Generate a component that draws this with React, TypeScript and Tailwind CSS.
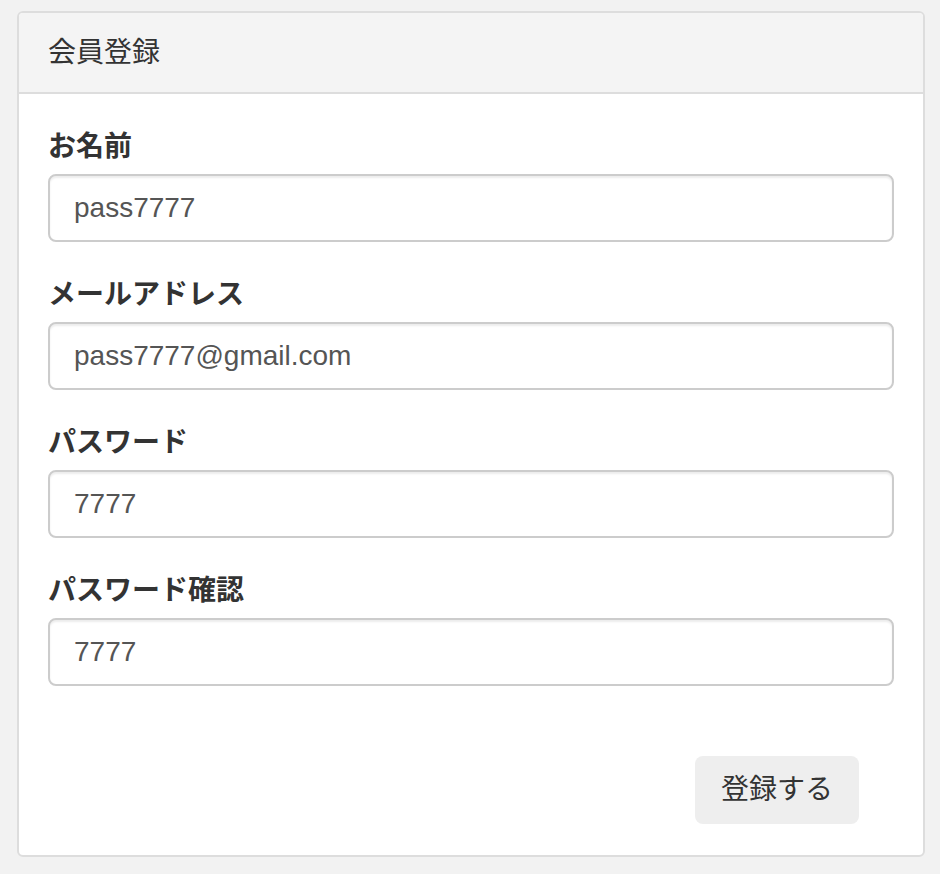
import React, { useState } from 'react';

const fields = [
  { id: 'name', label: 'お名前', type: 'text', value: 'pass7777' },
  { id: 'email', label: 'メールアドレス', type: 'email', value: 'pass7777@gmail.com' },
  { id: 'password', label: 'パスワード', type: 'text', value: '7777' },
  { id: 'password_confirmation', label: 'パスワード確認', type: 'text', value: '7777' },
];

const font = "font-['Liberation_Sans','Noto_Sans_CJK_JP',sans-serif]";

export default function App() {
  const [values, setValues] = useState<Record<string, string>>(
    Object.fromEntries(fields.map((f) => [f.id, f.value]))
  );

  return (
    <div className={`min-h-[874px] bg-[#f2f2f2] pt-[11px] pl-[17px] pr-[15px] ${font}`}>
      <div className="bg-white border-2 border-[#dddddd] rounded-[6px] overflow-hidden">
        <div className="bg-[#f4f4f4] border-b-2 border-[#dddddd] px-[29px] pt-[20px] pb-[19px] text-[28px] leading-[40px] text-[#333333]">
          会員登録
        </div>

        <form className="px-[29px] pt-[33px] pb-[31px]" onSubmit={(e) => e.preventDefault()}>
          {fields.map((f) => (
            <div key={f.id} className="mb-[33px]">
              <label
                htmlFor={f.id}
                className="block mb-[7px] text-[28px] leading-[40px] font-bold text-[#333333]"
              >
                {f.label}
              </label>
              <input
                id={f.id}
                type={f.type}
                value={values[f.id]}
                onChange={(e) => setValues({ ...values, [f.id]: e.target.value })}
                className={`block w-full h-[68px] px-[24px] border-2 border-[#cccccc] rounded-[8px] bg-white text-[28px] text-[#555555] shadow-[inset_0_2px_2px_rgba(0,0,0,0.075)] outline-none ${font}`}
              />
            </div>
          ))}

          <div className="flex justify-end pt-[37px] pr-[35px]">
            <button
              type="submit"
              className={`h-[68px] w-[164px] rounded-[8px] bg-[#eeeeee] text-[28px] text-[#333333] ${font}`}
            >
              登録する
            </button>
          </div>
        </form>
      </div>
    </div>
  );
}
